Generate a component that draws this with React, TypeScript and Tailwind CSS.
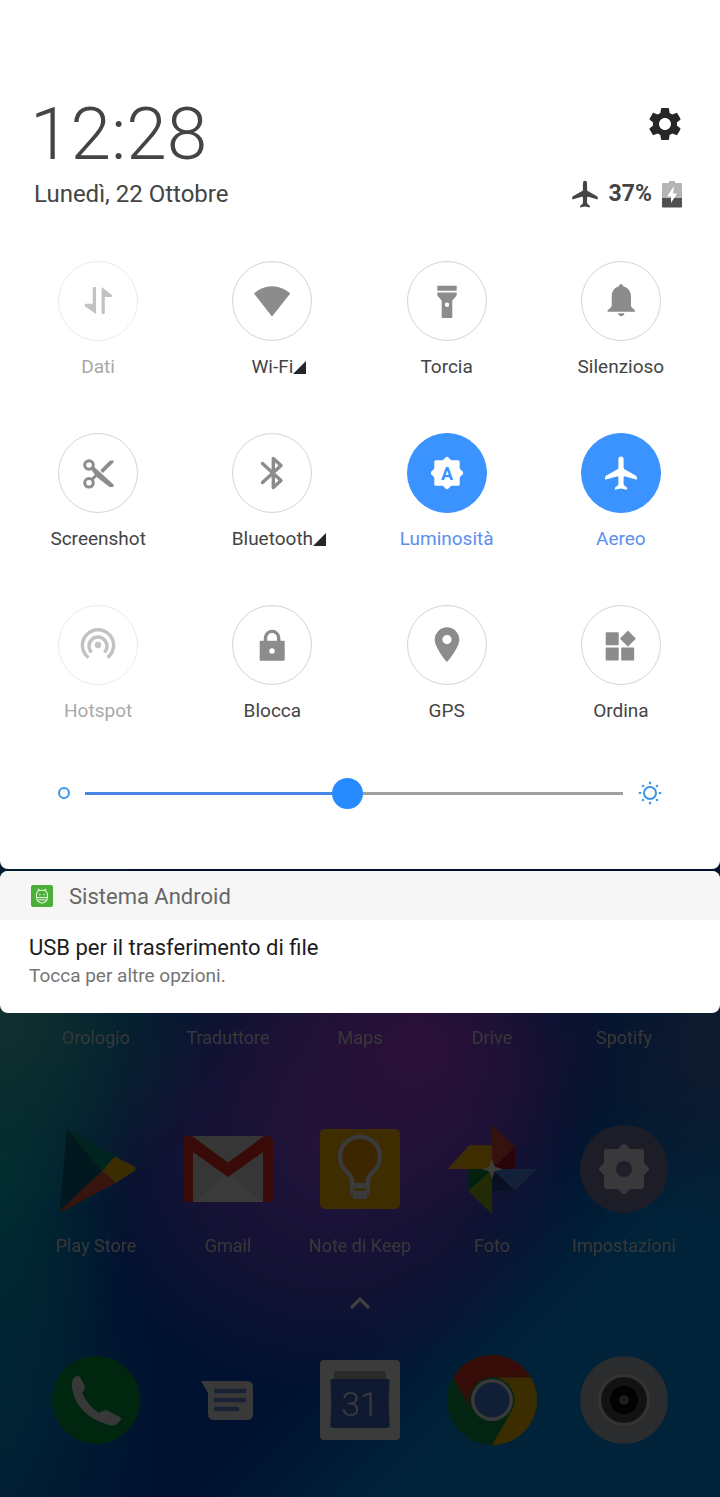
import React, { useState } from 'react';
import { MdSettings } from 'react-icons/md';

interface Tile {
  label: string;
  icon: React.ReactNode;
  state?: 'active' | 'disabled';
  expandable?: boolean;
}

interface AppItem {
  label: string;
  icon: React.ReactNode;
}

const Glyph: React.FC<{ children: React.ReactNode }> = ({ children }) => (
  <svg viewBox="0 0 40 40" className="w-10 h-10" fill="currentColor" aria-hidden="true">
    {children}
  </svg>
);

const Plane: React.FC<{ className: string }> = ({ className }) => (
  <svg viewBox="0 0 40 40" className={className} fill="currentColor" aria-hidden="true">
    <path d="M20 3.500q2.600 0 2.600 3v8.200q0 1 .9 1.500L35 22.800q.9.500.9 1.500v2.500l-11.700-3.400q-1.600-.3-1.600 1V31q0 .9.700 1.500l2.300 1.800q.5.500.5 1.200v1.300L20 35.600l-6.100 1.200v-1.300q0-.7.5-1.200l2.300-1.800q.7-.6.7-1.500v-6.600q0-1.300-1.600-1L4.100 26.800v-2.500q0-1 .9-1.500l11.500-6.600q.9-.5.9-1.500V6.500q0-3 2.600-3z" />
  </svg>
);

const tiles: Tile[] = [
  {
    label: 'Dati',
    state: 'disabled',
    icon: (
      <Glyph>
        <path d="M14.800 7q0-1 1-1H17q1 0 1 1v26L6.800 25.200q-.6-2 1-2.400h7z" />
        <path d="M26.800 32q0 1-1 1h-1.200q-1 0-1-1V6l10.600 8.200q.4 1.600-1 1.800h-6.400z" />
      </Glyph>
    ),
  },
  {
    label: 'Wi-Fi',
    expandable: true,
    icon: (
      <Glyph>
        <path d="M3 12.600Q10.500 6 20 6t17.200 6.600L20 34.200z" stroke="currentColor" strokeWidth="1.600" strokeLinejoin="round" />
      </Glyph>
    ),
  },
  {
    label: 'Torcia',
    icon: (
      <Glyph>
        <rect x="10.300" y="4.700" width="19.400" height="5" rx=".6" />
        <path
          fillRule="evenodd"
          d="M10.300 11.500h19.400v2q0 1-.8 2l-3 3.200q-.6.800-.6 1.800v15.700q0 .8-.8.8h-9q-.8 0-.8-.8V20.500q0-1-.6-1.800l-3-3.200q-.8-1-.8-2zM20 21.500a2.200 2.200 0 1 0 0 4.400a2.200 2.200 0 1 0 0-4.400z"
        />
      </Glyph>
    ),
  },
  {
    label: 'Silenzioso',
    icon: (
      <Glyph>
        <path d="M20 3q2 0 2.400 2.500c4.800 1.200 7.600 5 7.600 10v9q0 1.500 1 2.300l2.600 2.200q.4.400.4 1.700H6.500q0-1.300.4-1.700l2.600-2.200q1.200-.8 1.200-2.300v-9c0-5 2.600-8.800 7-10Q18 3 20 3z" />
        <path d="M17 32.200h6.500q-.8 3-3.200 3T17 32.200z" />
      </Glyph>
    ),
  },
  {
    label: 'Screenshot',
    icon: (
      <Glyph>
        <g fill="none" stroke="currentColor" strokeWidth="3">
          <circle cx="11" cy="12" r="4.300" />
          <circle cx="11" cy="29.800" r="4.300" />
          <path d="M14 26.500l5-5" />
        </g>
        <path d="M13.200 16.200l2.600-2.800L35.500 31.500V34h-4L18 23.500zM22.300 17.300L31 8.500q.8-.9 2-.9h2.500v1.800L24.800 20z" />
      </Glyph>
    ),
  },
  {
    label: 'Bluetooth',
    expandable: true,
    icon: (
      <Glyph>
        <path
          d="M10.500 10.500L29 27.500l-7.700 7V5.500l7.700 7l-18.500 17"
          fill="none"
          stroke="currentColor"
          strokeWidth="3.400"
          strokeLinecap="round"
          strokeLinejoin="round"
        />
      </Glyph>
    ),
  },
  {
    label: 'Luminosità',
    state: 'active',
    icon: (
      <Glyph>
        <rect x="7.300" y="7.300" width="25.400" height="25.400" rx="1.500" />
        <rect x="8" y="8" width="24" height="24" rx="2" transform="rotate(45 20 20)" />
        <text x="20" y="26.500" textAnchor="middle" fontSize="18" fontWeight="700" fill="#3a93ff">
          A
        </text>
      </Glyph>
    ),
  },
  {
    label: 'Aereo',
    state: 'active',
    icon: <Plane className="w-10 h-10" />,
  },
  {
    label: 'Hotspot',
    state: 'disabled',
    icon: (
      <Glyph>
        <circle cx="20" cy="20" r="3.200" />
        <g fill="none" stroke="currentColor" strokeWidth="3.400">
          <path d="M13.600 27.400a9 9 0 1 1 12.800 0" />
          <path d="M10.500 32.700a15.600 15.600 0 1 1 19 0" />
        </g>
      </Glyph>
    ),
  },
  {
    label: 'Blocca',
    icon: (
      <Glyph>
        <path d="M13.500 17v-4a6.600 6.600 0 0 1 13.200 0v4" fill="none" stroke="currentColor" strokeWidth="3.400" />
        <path
          fillRule="evenodd"
          d="M8.700 15.700h23q1 0 1 1v18q0 1-1 1h-23q-1 0-1-1v-18q0-1 1-1zM20 23.300a2.700 2.700 0 1 0 0 5.400a2.700 2.700 0 1 0 0-5.400z"
        />
      </Glyph>
    ),
  },
  {
    label: 'GPS',
    icon: (
      <Glyph>
        <path
          fillRule="evenodd"
          d="M20 2.300A12.300 12.300 0 0 0 7.700 14.600C7.700 23 20 37.300 20 37.300S32.300 23 32.300 14.600A12.300 12.300 0 0 0 20 2.300zM20 10a4.600 4.600 0 1 0 0 9.200a4.600 4.600 0 1 0 0-9.200z"
        />
      </Glyph>
    ),
  },
  {
    label: 'Ordina',
    icon: (
      <Glyph>
        <rect x="4.700" y="7.300" width="13" height="13" rx=".8" />
        <rect x="4.700" y="22.500" width="13" height="13" rx=".8" />
        <rect x="20.200" y="22.500" width="13" height="13" rx=".8" />
        <rect x="21.200" y="8" width="11.400" height="11.400" rx=".6" transform="rotate(45 26.900 13.700)" />
      </Glyph>
    ),
  },
];

const AppIcon: React.FC<{ children: React.ReactNode }> = ({ children }) => (
  <svg viewBox="0 0 96 96" className="w-24 h-24" aria-hidden="true">
    {children}
  </svg>
);

const topLabels = ['Orologio', 'Traduttore', 'Maps', 'Drive', 'Spotify'];

const apps: AppItem[] = [
  {
    label: 'Play Store',
    icon: (
      <AppIcon>
        <path d="M18.700 7.300L54 50L12 89.700z" fill="#006078" />
        <path d="M18.700 7.300L67 35.500L54 50z" fill="#009078" />
        <path d="M67 35.500L85.500 45q4.500 2.500 0 5.500L67.700 62L54 50z" fill="#f0b400" />
        <path d="M54 50L67.700 62L16 89.500q-3 1.500-4 .2z" fill="#e0503a" />
      </AppIcon>
    ),
  },
  {
    label: 'Gmail',
    icon: (
      <AppIcon>
        <rect x="6" y="15" width="84" height="66" rx="2" fill="#d8d8d8" />
        <path d="M13 81L48 52L83 81z" fill="#e6e6e6" />
        <path d="M3 20q0-5 5-5h4L48 41.500L84 15h4q5 0 5 5v58q0 3-3 3h-7V31L48 56L13 31v50H6q-3 0-3-3z" fill="#e02a20" />
      </AppIcon>
    ),
  },
  {
    label: 'Note di Keep',
    icon: (
      <AppIcon>
        <rect x="8" y="8" width="80" height="80" rx="5" fill="#f4b400" />
        <path
          d="M40 64v-5c0-3-2-5-5-8a20 20 0 1 1 26 0c-3 3-5 5-5 8v5z"
          fill="#f09a00"
          stroke="#e6e6e6"
          strokeWidth="4.500"
          strokeLinejoin="round"
        />
        <path d="M38 63h20v11h-3v4H41v-4h-3z" fill="#e6e6e6" />
        <path d="M42 68.500h12" stroke="#f4b400" strokeWidth="2.500" />
      </AppIcon>
    ),
  },
  {
    label: 'Foto',
    icon: (
      <AppIcon>
        <path d="M47.700 4L71 26L48 48z" fill="#db4437" />
        <path d="M71 26v22H48z" fill="#a8102a" />
        <path d="M3.700 48L25.300 24.300H48V48z" fill="#f4b400" />
        <path d="M48 48h44.700L71 70z" fill="#4a80e0" />
        <path d="M48 48L71 70H48z" fill="#20408a" />
        <path d="M48 93L24.300 70L48 48z" fill="#8aa818" />
        <path d="M24.300 48H48L24.300 70z" fill="#0a8a3a" />
        <path d="M48 38l2.500 7.500L58 48l-7.500 2.500L48 58l-2.500-7.500L38 48l7.500-2.500z" fill="#f0f0f0" />
      </AppIcon>
    ),
  },
  {
    label: 'Impostazioni',
    icon: (
      <AppIcon>
        <circle cx="48" cy="48" r="44" fill="#70759a" />
        <rect x="28" y="28" width="40" height="40" rx="3" fill="#e2e4ea" />
        <rect x="29.500" y="29.500" width="37" height="37" rx="3" fill="#e2e4ea" transform="rotate(45 48 48)" />
        <circle cx="48" cy="48" r="8" fill="#777ca4" />
      </AppIcon>
    ),
  },
];

const dock: AppItem[] = [
  {
    label: 'Telefono',
    icon: (
      <AppIcon>
        <circle cx="48" cy="48" r="44" fill="#009a3c" />
        <path
          d="M25 27q4-5 7-2l5 9q0 4-3 7q6 13 17 20q5-4 9-2l12 6q2 2 0 4q-5 6-11 4Q29 64 24 36q-.500-5 1-9z"
          fill="#e0e0e0"
        />
      </AppIcon>
    ),
  },
  {
    label: 'Messaggi',
    icon: (
      <AppIcon>
        <path d="M21 29h46q6 0 6 6v27q0 6-6 6H34q-6 0-6-6V41z" fill="#e4e4e4" />
        <path d="M34 39h32M34 48h32M34 57h25" stroke="#6088d0" strokeWidth="4.500" />
      </AppIcon>
    ),
  },
  {
    label: 'Calendario',
    icon: (
      <AppIcon>
        <rect x="8" y="8" width="80" height="80" rx="4" fill="#ececec" />
        <rect x="22" y="19" width="52" height="12" rx="2" fill="#a8a8a8" />
        <path d="M21 27h54q3 0 2.600 3q-1.600 18 0 43q0 3-3 3H21.400q-3 0-3-3q1.600-25 0-43q-.400-3 2.600-3z" fill="#3d66c4" />
        <text x="48" y="64" textAnchor="middle" fontSize="34" fontWeight="300" fill="#e0e6f4">
          31
        </text>
      </AppIcon>
    ),
  },
  {
    label: 'Chrome',
    icon: (
      <AppIcon>
        <circle cx="48" cy="48" r="45" fill="#0c9048" />
        <path d="M9 25.500A45 45 0 0 1 87 25.500H48A22.500 22.500 0 0 0 28.500 59.200z" fill="#d93025" />
        <path d="M87 25.500A45 45 0 0 1 48 93L67.500 59.200A22.500 22.500 0 0 0 48 25.500z" fill="#f0b400" />
        <circle cx="48" cy="48" r="21" fill="#e4e4e4" />
        <circle cx="48" cy="48" r="17.500" fill="#3f7ad8" />
      </AppIcon>
    ),
  },
  {
    label: 'Fotocamera',
    icon: (
      <AppIcon>
        <circle cx="48" cy="48" r="44" fill="#aab0b8" />
        <circle cx="48" cy="48" r="26" fill="#d0d0d0" />
        <circle cx="48" cy="48" r="23" fill="#484848" />
        <circle cx="48" cy="48" r="14" fill="#080808" />
        <circle cx="48" cy="48" r="5" fill="#707070" />
      </AppIcon>
    ),
  },
];

const getCircleStyle = (state?: Tile['state']) => {
  switch (state) {
    case 'active': return 'bg-[#3a93ff] border-[#3a93ff] text-white';
    case 'disabled': return 'border-[#ebebeb] text-[#c2c2c2]';
    default: return 'border-[#d4d4d4] text-[#8c8c8c]';
  }
};

const getLabelStyle = (state?: Tile['state']) => {
  switch (state) {
    case 'active': return 'text-[#5b8fee]';
    case 'disabled': return 'text-[#a9a9a9]';
    default: return 'text-[#444444]';
  }
};

const StatusHeader: React.FC = () => (
  <header className="flex justify-between pl-[34px] pr-[38px] text-[#444444]">
    <div>
      <div className="-ml-1 pt-1 text-[73px] leading-[76px] font-light">12:28</div>
      <div className="mt-[6px] text-2xl leading-8">Lunedì, 22 Ottobre</div>
    </div>
    <div className="flex flex-col items-end justify-between">
      <button type="button" aria-label="Impostazioni" className="mt-3 -mr-[3px] text-[#262626]">
        <MdSettings className="w-10 h-10" />
      </button>
      <div className="flex items-center h-8">
        <Plane className="w-8 h-8" />
        <span className="ml-2 text-[23px] leading-8 font-bold">37%</span>
        <svg viewBox="0 0 20 27" className="ml-[10px] w-5 h-[27px]" aria-hidden="true">
          <path d="M7 0h6v2h6q1 0 1 1v14H0V3q0-1 1-1h6z" fill="#b4b4b4" />
          <path d="M0 17h20v8.500q0 1-1 1H1q-1 0-1-1z" fill="#505050" />
          <path d="M12 5L5 15.500h4V22l6-9.500h-4z" fill="#ffffff" />
        </svg>
      </div>
    </div>
  </header>
);

const TileGrid: React.FC = () => (
  <div className="grid grid-cols-4 gap-y-[54px] mt-[51px] pl-[11px] pr-3">
    {tiles.map((tile) => (
      <button
        key={tile.label}
        type="button"
        disabled={tile.state === 'disabled'}
        aria-pressed={tile.state === 'active'}
        className="flex flex-col items-center"
      >
        <span className={`flex items-center justify-center w-20 h-20 rounded-full border ${getCircleStyle(tile.state)}`}>
          {tile.icon}
        </span>
        <span className={`relative mt-[14px] text-[19px] leading-6 ${getLabelStyle(tile.state)}`}>
          {tile.label}
          {tile.expandable && (
            <svg viewBox="0 0 13 13" className="absolute left-full bottom-[5px] w-[13px] h-[13px]" aria-hidden="true">
              <path d="M13 0v13H0z" fill="#262626" />
            </svg>
          )}
        </span>
      </button>
    ))}
  </div>
);

const BrightnessSlider: React.FC = () => {
  const [value, setValue] = useState(487);
  const fill = value / 10;

  return (
    <div className="flex items-center gap-[15px] mt-[54px] px-[58px]">
      <span className="w-3 h-3 shrink-0 rounded-full border-2 border-[#3a96e8]" />
      <input
        type="range"
        aria-label="Luminosità"
        min={0}
        max={1000}
        value={value}
        onChange={(e) => setValue(Number(e.target.value))}
        style={{ backgroundImage: `linear-gradient(to right, #4a86ea ${fill}%, #a0a0a0 ${fill}%)` }}
        className="flex-1 min-w-0 h-8 appearance-none bg-[length:100%_3px] bg-center bg-no-repeat [&::-webkit-slider-thumb]:appearance-none [&::-webkit-slider-thumb]:w-[31px] [&::-webkit-slider-thumb]:h-[31px] [&::-webkit-slider-thumb]:rounded-full [&::-webkit-slider-thumb]:bg-[#268bff]"
      />
      <svg viewBox="0 0 24 24" className="w-6 h-6 shrink-0" fill="none" stroke="#3a96e8" aria-hidden="true">
        <circle cx="12" cy="12" r="6" strokeWidth="2" />
        <path
          d="M12 .800v2.400M12 20.800v2.400M.800 12h2.400M20.800 12h2.400M4.200 4.200l1.600 1.600M18.200 18.200l1.600 1.600M4.200 19.800l1.600-1.600M18.200 5.800l1.600-1.600"
          strokeWidth="2.200"
        />
      </svg>
    </div>
  );
};

const Notification: React.FC = () => (
  <article className="mt-[2px] rounded-lg overflow-hidden bg-white">
    <div className="flex items-center h-[49px] pl-[31px] bg-[#f6f6f6]">
      <svg viewBox="0 0 22 22" className="w-[22px] h-[22px]" aria-hidden="true">
        <rect width="22" height="22" rx="2" fill="#4caf3a" />
        <g fill="none" stroke="#e4f8dc" strokeWidth="1.100">
          <path d="M5.500 11.500V9.500q0-2 1.500-3L7.500 4.500l1.500 1q2-.6 4 0l1.500-1l.500 2q1.500 1 1.500 3v2.500a5.500 6 0 0 1-11 0zM5.500 12.500h11M7.500 14.800h7" />
        </g>
        <circle cx="8.800" cy="9.500" r=".8" fill="#e4f8dc" />
        <circle cx="13.200" cy="9.500" r=".8" fill="#e4f8dc" />
      </svg>
      <span className="ml-4 mt-[2px] text-[22px] leading-7 text-[#666666]">Sistema Android</span>
    </div>
    <div className="pt-[14px] pb-[25px] pl-[29px]">
      <h2 className="text-[22px] leading-7 text-[#1c1c1c]">USB per il trasferimento di file</h2>
      <p className="mt-[2px] text-[19px] leading-6 text-[#757575]">Tocca per altre opzioni.</p>
    </div>
  </article>
);

const HomeScreen: React.FC = () => (
  <section className="pt-[13px] pb-[49px] px-[30px] text-[#dcdcdc] text-lg leading-6 brightness-25">
    <div className="grid grid-cols-5 text-center">
      {topLabels.map((label) => (
        <span key={label}>{label}</span>
      ))}
    </div>
    <div className="grid grid-cols-5 mt-[71px]">
      {apps.map((app) => (
        <button key={app.label} type="button" className="flex flex-col items-center whitespace-nowrap leading-6">
          {app.icon}
          <span className="mt-[17px]">{app.label}</span>
        </button>
      ))}
    </div>
    <svg viewBox="0 0 24 24" className="w-6 h-6 mx-auto mt-[33px]" fill="none" aria-hidden="true">
      <path d="M3 17l9-9l9 9" stroke="#ffffff" strokeWidth="3.200" />
    </svg>
    <div className="grid grid-cols-5 mt-[37px]">
      {dock.map((app) => (
        <button key={app.label} type="button" aria-label={app.label} className="flex justify-center">
          {app.icon}
        </button>
      ))}
    </div>
  </section>
);

export default function App() {
  return (
    <main className="min-h-screen font-[Roboto,sans-serif] bg-[#00122f] bg-[radial-gradient(ellipse_30%_14%_at_0%_68%,#12302f_0%,#0a302f90_50%,transparent_100%),radial-gradient(ellipse_18%_22%_at_0%_78%,#002d30_0%,#002a3090_50%,transparent_100%),radial-gradient(ellipse_28%_12%_at_58%_70%,#2c1038_0%,#2a103890_50%,transparent_100%),radial-gradient(ellipse_36%_16%_at_46%_77%,#22133a_0%,#1a1236c0_55%,transparent_100%),radial-gradient(ellipse_24%_12%_at_100%_70%,#101a2e_0%,#0c1a2ea0_50%,transparent_100%),radial-gradient(ellipse_22%_20%_at_0%_95%,#002236_0%,transparent_100%),linear-gradient(135deg,transparent_76%,#00233a_85%)]">
      <section className="pt-[92px] pb-[60px] rounded-b-lg bg-white">
        <StatusHeader />
        <TileGrid />
        <BrightnessSlider />
      </section>
      <Notification />
      <HomeScreen />
    </main>
  );
}
